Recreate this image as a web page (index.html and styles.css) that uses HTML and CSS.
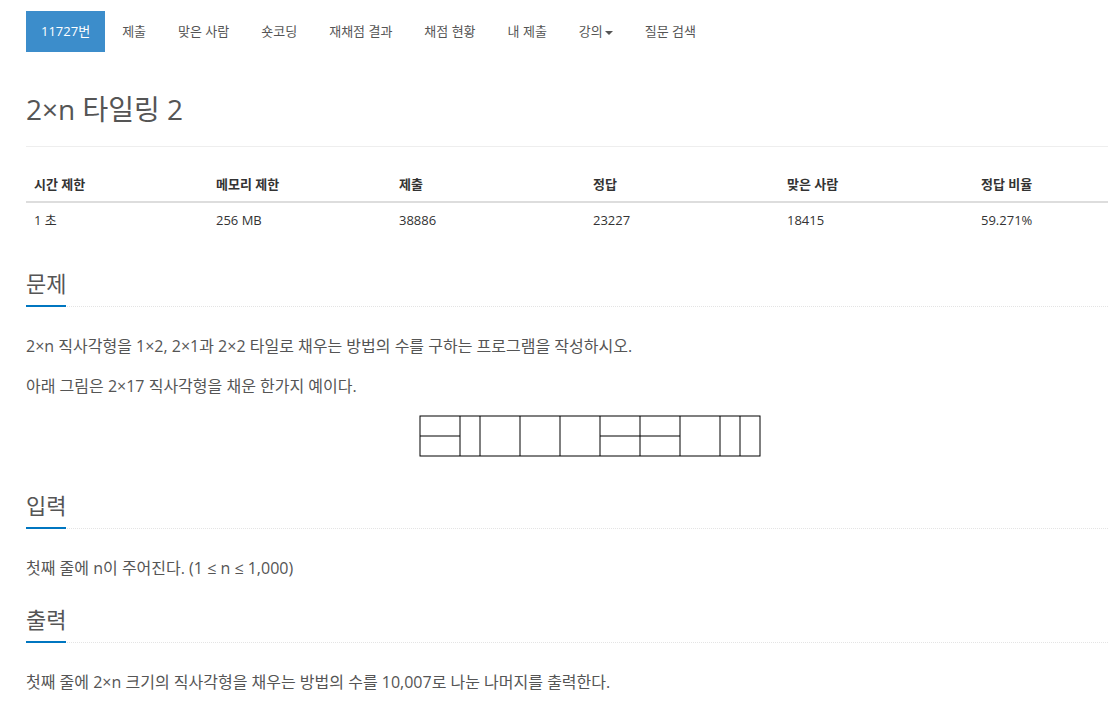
FILE: index.html
```html
<!DOCTYPE html>
<html lang="ko">
<head>
    <meta charset="UTF-8">
    <title>2×n 타일링 2</title>
    <link rel="stylesheet" href="styles.css">
</head>
<body>
    <div class="container">
        <ul class="nav-pills">
            <li class="active"><a href="#">11727번</a></li>
            <li><a href="#">제출</a></li>
            <li><a href="#">맞은 사람</a></li>
            <li><a href="#">숏코딩</a></li>
            <li><a href="#">재채점 결과</a></li>
            <li><a href="#">채점 현황</a></li>
            <li><a href="#">내 제출</a></li>
            <li><a href="#">강의<span class="caret"></span></a></li>
            <li><a href="#">질문 검색</a></li>
        </ul>

        <div class="page-header">
            <h1>2×n 타일링 2</h1>
        </div>

        <table class="problem-info">
            <thead>
                <tr>
                    <th class="c1">시간 제한</th>
                    <th class="c2">메모리 제한</th>
                    <th class="c3">제출</th>
                    <th class="c3">정답</th>
                    <th class="c3">맞은 사람</th>
                    <th>정답 비율</th>
                </tr>
            </thead>
            <tbody>
                <tr>
                    <td>1 초</td>
                    <td>256 MB</td>
                    <td>38886</td>
                    <td>23227</td>
                    <td>18415</td>
                    <td>59.271%</td>
                </tr>
            </tbody>
        </table>

        <section class="problem-section">
            <div class="headline"><h2>문제</h2></div>
            <p>2×n 직사각형을 1×2, 2×1과 2×2 타일로 채우는 방법의 수를 구하는 프로그램을 작성하시오.</p>
            <p>아래 그림은 2×17 직사각형을 채운 한가지 예이다.</p>
            <div class="figure">
                <svg width="342" height="42" viewBox="-1 -1 342 42">
                    <g fill="none" stroke="#000" stroke-width="1">
                        <rect x="0" y="0" width="340" height="40"/>
                        <line x1="40" y1="0" x2="40" y2="40"/>
                        <line x1="60" y1="0" x2="60" y2="40"/>
                        <line x1="100" y1="0" x2="100" y2="40"/>
                        <line x1="140" y1="0" x2="140" y2="40"/>
                        <line x1="180" y1="0" x2="180" y2="40"/>
                        <line x1="220" y1="0" x2="220" y2="40"/>
                        <line x1="260" y1="0" x2="260" y2="40"/>
                        <line x1="300" y1="0" x2="300" y2="40"/>
                        <line x1="320" y1="0" x2="320" y2="40"/>
                        <line x1="0" y1="20" x2="40" y2="20"/>
                        <line x1="180" y1="20" x2="260" y2="20"/>
                    </g>
                </svg>
            </div>
        </section>

        <section class="problem-section">
            <div class="headline"><h2>입력</h2></div>
            <p>첫째 줄에 n이 주어진다. (1 ≤ n ≤ 1,000)</p>
        </section>

        <section class="problem-section">
            <div class="headline"><h2>출력</h2></div>
            <p>첫째 줄에 2×n 크기의 직사각형을 채우는 방법의 수를 10,007로 나눈 나머지를 출력한다.</p>
        </section>
    </div>
</body>
</html>
```

FILE: styles.css
```css
body {
    margin: 0;
    font-family: "Open Sans", "Noto Sans CJK KR", sans-serif;
    color: #555;
    background: #fff;
    overflow-x: hidden;
}
.container {
    width: 1128px;
    padding: 11px 0 0 26px;
}
.nav-pills {
    display: flex;
    list-style: none;
    margin: 0;
    padding: 0;
}
.nav-pills li + li {
    margin-left: 2px;
}
.nav-pills a {
    display: block;
    height: 41px;
    line-height: 41px;
    padding: 0 15px;
    font-size: 13px;
    color: #555;
    text-decoration: none;
}
.nav-pills .active a {
    background: #3c8dcb;
    color: #fff;
}
.caret {
    display: inline-block;
    width: 0;
    height: 0;
    margin-left: 2px;
    vertical-align: middle;
    border-top: 4px solid #555;
    border-left: 4px solid transparent;
    border-right: 4px solid transparent;
}
.page-header {
    margin-top: 37px;
    padding-bottom: 17px;
    border-bottom: 1px solid #eee;
}
.page-header h1 {
    margin: 0;
    font-size: 28px;
    font-weight: 400;
    line-height: 40px;
}
.problem-info {
    width: 100%;
    border-collapse: collapse;
    margin: 20px 0;
    font-size: 13px;
}
.problem-info th {
    text-align: left;
    font-weight: 700;
    color: #333;
    padding: 8px;
    line-height: 18px;
    border-bottom: 2px solid #ddd;
}
.problem-info td {
    padding: 8px;
    line-height: 18px;
    color: #333;
}
.problem-info .c1 {
    width: 166px;
}
.problem-info .c2 {
    width: 167px;
}
.problem-info .c3 {
    width: 178px;
}
/* padding instead of margin so it adds to the block above */
.headline {
    margin: 0 0 24px;
    padding-top: 11px;
    border-bottom: 1px dotted #e4e4e4;
}
.headline h2 {
    display: inline-block;
    margin: 0 0 -1px;
    padding-bottom: 7px;
    font-size: 22px;
    font-weight: 400;
    line-height: 30px;
    border-bottom: 2px solid #0076c0;
}
.problem-section p {
    margin: 0 0 10px;
    font-size: 16px;
    line-height: 30px;
}
.figure {
    display: flex;
    justify-content: center;
    margin: 14px 0 22px;
}
```
